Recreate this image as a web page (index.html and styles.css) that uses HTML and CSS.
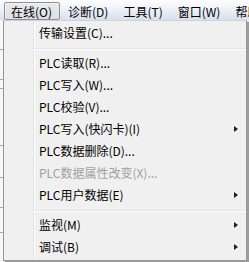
FILE: index.html
```html
<!DOCTYPE html>
<html lang="zh-CN">
<head>
<meta charset="utf-8">
<title>在线菜单</title>
<link rel="stylesheet" href="styles.css">
</head>
<body>
<div class="app">
  <nav class="menubar">
    <div class="mb-item active">在线(O)</div>
    <div class="mb-item">诊断(D)</div>
    <div class="mb-item">工具(T)</div>
    <div class="mb-item">窗口(W)</div>
    <div class="mb-item">帮助(H)</div>
  </nav>
  <div class="workspace">
    <div class="side">
      <div class="cell h30"></div>
      <div class="cell h30"></div>
      <div class="cell h9"></div>
      <div class="cell h57"></div>
      <div class="cell h32"></div>
      <div class="cell h30"></div>
      <div class="cell h25"></div>
    </div>
  </div>
  <div class="dropdown">
    <div class="mi">传输设置(C)...</div>
    <div class="sep"></div>
    <div class="mi">PLC读取(R)...</div>
    <div class="mi">PLC写入(W)...</div>
    <div class="mi">PLC校验(V)...</div>
    <div class="mi sub">PLC写入(快闪卡)(I)<span class="arrow"></span></div>
    <div class="mi">PLC数据删除(D)...</div>
    <div class="mi disabled">PLC数据属性改变(X)...</div>
    <div class="mi sub">PLC用户数据(E)<span class="arrow"></span></div>
    <div class="sep"></div>
    <div class="mi sub">监视(M)<span class="arrow"></span></div>
    <div class="mi sub">调试(B)<span class="arrow"></span></div>
  </div>
</div>
</body>
</html>
```
FILE: styles.css
```css
html, body {
  margin: 0;
  padding: 0;
}
body {
  width: 249px;
  height: 262px;
  overflow: hidden;
  background: #f0f0f0;
  font-family: "Noto Sans CJK SC", sans-serif;
  font-size: 12px;
  color: #000;
}
.app {
  position: relative;
  width: 249px;
  height: 262px;
  overflow: hidden;
}
.menubar {
  display: flex;
  align-items: center;
  height: 20px;
  padding-left: 4px;
  background: linear-gradient(#fdfdfe 0%, #eef2f8 45%, #d8e0ee 100%);
  box-sizing: border-box;
  white-space: nowrap;
}
.mb-item {
  flex: none;
  height: 18px;
  line-height: 17px;
  padding: 0 7px 0 6px;
  border: 1px solid transparent;
  box-sizing: border-box;
  margin-top: 1px;
}
.mb-item.active {
  padding: 0 7px 0 6px;
  margin-right: 1px;
  border-color: #8d8f93;
  border-radius: 2px;
  background: linear-gradient(#e9eaec, #dcdfe4);
  box-shadow: inset 1px 1px 0 rgba(255,255,255,0.5);
}
.workspace {
  height: 242px;
  display: flex;
}
.side {
  width: 3px;
  display: flex;
  flex-direction: column;
  background: #f7f7f7;
}
.cell {
  border-bottom: 1px solid #a9a9a9;
}
.h30 { height: 29px; }
.h9 { height: 8px; }
.h57 { height: 56px; }
.h32 { height: 31px; }
.h25 { height: 24px; }

.dropdown {
  position: absolute;
  left: 3px;
  top: 20px;
  width: 244px;
  box-sizing: border-box;
  border: 1px solid #979797;
  border-top-color: #cdd2da;
  padding: 1px 0 2px 0;
  background:
    linear-gradient(to right, transparent 29px, #e2e3e3 29px, #e2e3e3 30px, #ffffff 30px, #ffffff 31px, transparent 31px),
    #f0f0f0;
  box-shadow: 2px 2px 1px rgba(0, 0, 0, 0.35);
}
.mi {
  display: flex;
  align-items: center;
  height: 22px;
  line-height: 22px;
  padding-left: 35px;
  padding-right: 8px;
  white-space: nowrap;
}
.mi.disabled {
  color: #a0a0a0;
}
.arrow {
  margin-left: auto;
  width: 0;
  height: 0;
  border-left: 4px solid #1e1e1e;
  border-top: 3.5px solid transparent;
  border-bottom: 3.5px solid transparent;
}
.sep {
  height: 1px;
  margin: 4px 0 2px 29px;
  background: #e2e3e3;
  border-bottom: 1px solid #ffffff;
}
```
